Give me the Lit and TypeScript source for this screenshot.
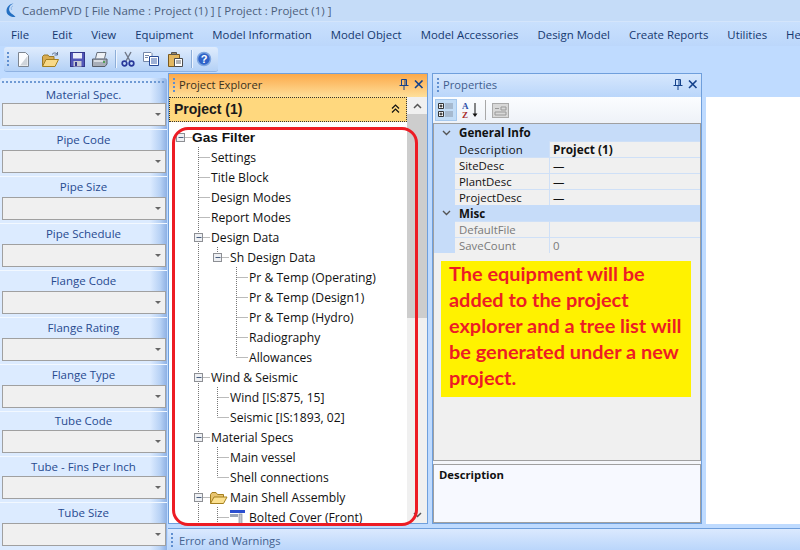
import { LitElement, html, css, svg } from "lit";
import { customElement } from "lit/decorators.js";

type Row = { d: number; t: string; box?: boolean; b?: boolean; icon?: "folder" | "part" };
const ROWS: Row[] = [
  { d: 0, t: "Gas Filter", box: true, b: true },
  { d: 1, t: "Settings" },
  { d: 1, t: "Title Block" },
  { d: 1, t: "Design Modes" },
  { d: 1, t: "Report Modes" },
  { d: 1, t: "Design Data", box: true },
  { d: 2, t: "Sh Design Data", box: true },
  { d: 3, t: "Pr & Temp (Operating)" },
  { d: 3, t: "Pr & Temp (Design1)" },
  { d: 3, t: "Pr & Temp (Hydro)" },
  { d: 3, t: "Radiography" },
  { d: 3, t: "Allowances" },
  { d: 1, t: "Wind & Seismic", box: true },
  { d: 2, t: "Wind [IS:875, 15]" },
  { d: 2, t: "Seismic [IS:1893, 02]" },
  { d: 1, t: "Material Specs", box: true },
  { d: 2, t: "Main vessel" },
  { d: 2, t: "Shell connections" },
  { d: 1, t: "Main Shell Assembly", box: true, icon: "folder" },
  { d: 2, t: "Bolted Cover (Front)", icon: "part" },
];
const GX = [11.5, 29.5, 48.5, 67.5];
const TEXTX = [23, 42, 61, 80];

function continues(i: number, l: number) {
  for (let j = i + 1; j < ROWS.length; j++) {
    if (ROWS[j].d < l) return false;
    if (ROWS[j].d === l) return true;
  }
  return true;
}
function rowSvg(i: number) {
  const r = ROWS[i];
  const dotted = "stroke:#777;stroke-dasharray:1 1;stroke-width:1";
  const w = r.icon ? TEXTX[r.d + 1] : TEXTX[r.d];
  const parts: unknown[] = [];
  for (let l = 1; l <= r.d; l++) {
    const c = continues(i, l);
    if (l === r.d) parts.push(svg`<line x1=${GX[l]} x2=${GX[l]} y1="0" y2=${c ? 20 : 10} style=${dotted}></line>`);
    else if (c) parts.push(svg`<line x1=${GX[l]} x2=${GX[l]} y1="0" y2="20" style=${dotted}></line>`);
  }
  const x = GX[r.d];
  parts.push(svg`<line x1=${x} x2=${x + 11} y1="10.5" y2="10.5" style=${dotted}></line>`);
  if (r.box) {
    parts.push(svg`<rect x=${x - 4} y="6.5" width="8" height="8" fill="#eef0f3" stroke="#8d8f94"></rect><line x1=${x - 2} x2=${x + 3} y1="10.5" y2="10.5" stroke="#4a5f80"></line>`);
  }
  if (r.icon === "folder") {
    parts.push(svg`<path d="M41.500 16.500V7.500l1.500-2h4l1.500 2h6v3" fill="#e8c470" stroke="#a5801f"></path><path d="M41.500 16.500l3.500-6.500h13l-3.500 6.500z" fill="#fbe08f" stroke="#a5801f"></path>`);
  }
  if (r.icon === "part") {
    parts.push(svg`<rect x="61" y="3" width="15" height="3" fill="#2b4fd0"></rect><rect x="61" y="7" width="8" height="3" fill="#9aa5b8"></rect><rect x="70" y="7" width="3" height="13" fill="#c4c8d0" stroke="#7b818c" stroke-width=".6"></rect>`);
  }
  return html`<svg class="guide" width=${w} height="20" viewBox="0 0 ${w} 20">${parts}</svg>`;
}

const COMBOS: [string, string][] = [
  ["Material Spec.", "first"], ["Pipe Code", ""], ["Pipe Size", ""], ["Pipe Schedule", ""], ["Flange Code", ""],
  ["Flange Rating", ""], ["Flange Type", ""], ["Tube Code", "l18"], ["Tube - Fins Per Inch", "l19"], ["Tube Size", ""],
];
const MENUS = [
  "File", "Edit", "View", "Equipment", "Model Information", "Model Object",
  "Model Accessories", "Design Model", "Create Reports", "Utilities", "Help",
];

const pinClose = html`
  <svg class="pin" width="10" height="11" viewBox="0 0 10 11"><path d="M2.500 .5h5v6h-5zM6 .5v6M.5 6.500h9M5 7v4" fill="none" stroke="#15428b"></path></svg>
  <svg class="pin" width="10" height="9" viewBox="0 0 10 9"><path d="M1 .5l7.500 7.500M8.500 .5l-7.500 7.500" stroke="#15428b" stroke-width="1.600" fill="none"></path></svg>`;
const dots = html`<span class="dots"></span>`;

const TB: [string, number, unknown][] = [
  ["w24", 16, svg`<path d="M3.500 1.500h7l3 3v11h-10z" fill="#fbfcfe" stroke="#7d8590"></path><path d="M5 14.500L12.500 5v9.500z" fill="#cfd4da"></path>`],
  ["w30", 18, svg`<path d="M1.500 15V5.500l1.500-1.500h4l1 1.500h5v3" fill="#d9ad52" stroke="#9a7a2c"></path><path d="M1.500 15.500l3.500-7h12.500l-3.500 7z" fill="#f8d988" stroke="#a5801f"></path><path d="M11 3.500c1.500-2 3.500-2 5-.5M16.500 1v3h-3" stroke="#5d6f8c" fill="none"></path>`],
  ["w24", 16, svg`<rect x="1.500" y="1.500" width="14" height="14" fill="#5257b8" stroke="#34378c"></rect><rect x="4" y="2" width="9" height="5.500" fill="#e9ecfa"></rect><rect x="4.500" y="10" width="8" height="5.500" fill="#c7cad4"></rect><rect x="6" y="11" width="2" height="4" fill="#34378c"></rect>`],
  ["w20", 17, svg`<path d="M4.500 7.500l1.500-6h9l-1.500 6" fill="#eef1f5" stroke="#68707c"></path><path d="M1.500 8h14.500v5l-2 2.500H1.500z" fill="#a8aeb8" stroke="#565d68"></path><path d="M3 10h9" stroke="#e8ebf0" stroke-width="1.500"></path><circle cx="13" cy="11" r="1" fill="#3a9a3a"></circle>`],
  ["sep", 0, null],
  ["w24", 16, svg`<path d="M5 1l5 9M11 1L6 10" stroke="#707888" stroke-width="1.400" fill="none"></path><circle cx="4.500" cy="12.500" r="2.300" fill="none" stroke="#28389a" stroke-width="1.700"></circle><circle cx="11.500" cy="12.500" r="2.300" fill="none" stroke="#28389a" stroke-width="1.700"></circle>`],
  ["w22", 16, svg`<path d="M.5 1.500h7.500l1 1v8h-8.500z" fill="#fff" stroke="#7487a8"></path><path d="M6.500 5.500h9v9h-9z" fill="#fff" stroke="#274a96"></path><path d="M8 8h6M8 10h6M8 12h6" stroke="#3d62ad"></path><path d="M2 4.500h4M2 6.500h3" stroke="#7487a8"></path>`],
  ["w26", 17, svg`<path d="M1.500 3.500h11v12h-11z" fill="#e4b860" stroke="#7a5a20"></path><path d="M4.500 3.500h5v-2h-5z" fill="#a08a60" stroke="#555"></path><path d="M7.500 7.500h8v8h-8z" fill="#fff" stroke="#4c4c4c"></path><path d="M9 10h5M9 12h5" stroke="#666"></path>`],
  ["sep2", 0, null],
  ["w24", 16, svg`<circle cx="8" cy="8" r="6.500" fill="#2f62c8" stroke="#7ea6e0" stroke-width="1.500"></circle><text x="8" y="12" text-anchor="middle" font-size="11" font-weight="700" font-family="Liberation Sans, sans-serif" fill="#fff">?</text>`],
];

@customElement("app-root")
export class AppRoot extends LitElement {
  static styles = css`
    :host {
      display: flex; flex-direction: column; width: 800px; height: 550px; overflow: hidden;
      background: #bfdbff; font: 12px "Open Sans", "Noto Sans", sans-serif; color: #15428b;
    }
    * { box-sizing: border-box; }
    .title {
      height: 22px; flex: none; display: flex; align-items: center; gap: 6px; padding-left: 6px;
      background: #c5dcf8; color: #4d5f7c; font-size: 11.5px; border-bottom: 1px solid #d4e5fb;
    }
    .menu {
      height: 24px; flex: none; display: flex; align-items: center; padding-left: 11px; white-space: nowrap;
      background: linear-gradient(#c9e0fd, #bcd7fb); color: #15386f; font-size: 11.4px;
    }
    .menu span { margin-right: 19px; }
    .menu span:first-child { margin-right: 23px; }
    .tbwrap { height: 27px; flex: none; padding: 1px 0 1px 4px; display: flex; }
    .toolbar {
      width: 214px; height: 25px; display: flex; align-items: center; padding-left: 1px;
      background: linear-gradient(#dfecfd, #b4d1f6); border-radius: 3px; border-bottom: 1px solid #8fb2e2;
    }
    .toolbar svg { flex: none; }
    .tb { display: flex; justify-content: center; flex: none; }
    .w20 { width: 20px; } .w22 { width: 22px; } .w24 { width: 24px; } .w26 { width: 26px; } .w30 { width: 30px; }
    .sep { width: 1px; height: 18px; background: #8daed8; margin: 0 0 0 6px; box-shadow: 1px 0 #eef5ff; flex: none; }
    .sep2 { width: 1px; height: 18px; background: #8daed8; margin: 0 0 0 3px; box-shadow: 1px 0 #eef5ff; flex: none; }
    .dots {
      width: 2px; height: 14px; flex: none; margin: 0 2px;
      background: repeating-linear-gradient(#5f8fd0 0 2px, transparent 2px 4px);
    }
    .body { flex: 1; display: flex; min-height: 0; }
    .left {
      width: 167px; flex: none; margin-top: 5px; padding-top: 3px;
      background: linear-gradient(90deg, #dcebff 0 150px, #b8d2f5 160px, #8db0e4 167px);
      border-radius: 3px 3px 0 0;
    }
    .hdots { height: 2px; margin: 0 2px 4px 2px; background: repeating-linear-gradient(90deg, #6f9ad4 0 2px, transparent 2px 4px); }
    .group { display: flex; flex-direction: column; align-items: center; padding: 0 1px 3px; }
    .group + .group { border-top: 1px solid #f2f8ff; }
    .group label { height: 20px; line-height: 20px; flex: none; color: #274a90; font-size: 11.5px; white-space: nowrap; }
    .group.first label { height: 16px; line-height: 16px; }
    .group.l18 label { height: 18px; line-height: 18px; }
    .group.l19 label { height: 19px; line-height: 19px; }
    .combo {
      width: 164px; height: 23px; flex: none; background: #f0f0f0; border: 1px solid #a0a0a0;
      display: flex; align-items: center; justify-content: flex-end; padding-right: 4px;
    }
    .arrow { width: 0; height: 0; border: 3px solid transparent; border-top: 3px solid #666; margin-top: 3px; }
    .right { flex: 1; display: flex; flex-direction: column; min-width: 0; padding-left: 1px; }
    .main { flex: 1; display: flex; min-height: 0; }
    .panel { display: flex; flex-direction: column; border: 1px solid #6f9fdc; height: 451px; }
    .explorer { width: 260px; background: #fff; }
    .phead {
      height: 23px; flex: none; display: flex; align-items: center; padding: 0 3px 2px 2px; color: #3d3d3d; font-size: 11.2px;
      background: linear-gradient(#fca94a, #fedf9a); gap: 5px;
    }
    .phead .dots { margin-right: 0; }
    .phead .name { flex: 1; margin-left: -1px; }
    .props { width: 270px; margin-left: 4px; background: #f0f0f0; }
    .props .phead { background: linear-gradient(#d6e7fd, #bad6fa); color: #3f5d8d; }
    .explorer .phead .name { color: #3a3020; }
    .ebody { flex: 1; display: flex; min-height: 0; position: relative; }
    .ecol { flex: 1; display: flex; flex-direction: column; min-width: 0; }
    .proj {
      height: 25px; flex: none; display: flex; align-items: center; justify-content: space-between; padding: 0 6px 2px 4px;
      background: #ffd87e; border: 1px dotted #333; font: 700 14px "Liberation Sans", sans-serif; color: #1a1a1a;
    }
    .tree { flex: 1; overflow: hidden; padding: 5px 0 0 0; }
    .row { height: 20px; display: flex; align-items: center; color: #111; font-size: 12.15px; white-space: nowrap; }
    .row.b { font: 700 13.7px "Liberation Sans", sans-serif; }
    .guide { flex: none; }
    .sbar { width: 20px; flex: none; background: #f0f0f0; display: flex; flex-direction: column; align-items: center; }
    .sbtn { height: 17px; flex: none; display: flex; align-items: center; justify-content: center; width: 100%; }
    .thumb { width: 100%; height: 204px; flex: none; background: #cdcdcd; }
    .sfill { flex: 1; }
    .outline {
      position: absolute; left: 3px; top: 30px; width: 246px; height: 399px;
      border: 3px solid #ed1c24; border-radius: 16px; pointer-events: none;
    }
    .ptools {
      height: 26px; flex: none; display: flex; align-items: center; gap: 3px; padding-left: 2px; background: linear-gradient(#fbfdff, #eef2f8);
    }
    .ptbtn { width: 22px; height: 22px; display: flex; align-items: center; justify-content: center; }
    .ptbtn.on { background: #c2dcf6; border: 1px solid #a5c8ee; }
    .psep { width: 1px; height: 20px; background: #a8a8a8; }
    .grid { flex: 1; position: relative; border: 1px solid #a0a0a0; background: #f0f0f0; }
    .cat { height: 16px; display: flex; align-items: center; background: #c6dcf9; color: #111; font: 700 11.6px "Open Sans", sans-serif; }
    .cat.tall { height: 17px; }
    .cat .tw { width: 25px; display: flex; justify-content: center; }
    .pr { height: 16px; display: flex; color: #111; font-size: 11.4px; border-top: 1px solid #cfe0f7; background: #f0f0f0; }
    .pr .gut { width: 21px; background: #c6dcf9; flex: none; margin-top: -1px; }
    .pr .n { width: 95px; padding-left: 4px; flex: none; line-height: 15px; border-right: 1px solid #cfe0f7; }
    .pr .n.sel { background: #c6dcf9; margin-top: -1px; padding-top: 1px; letter-spacing: .3px; }
    .pr .v { flex: 1; padding-left: 3px; line-height: 15px; }
    .pr .v.b { font-weight: 700; font-size: 11.8px; }
    .pr.dim { color: #7a7a7a; }
    .callout {
      position: absolute; left: 7px; top: 137px; width: 250px; height: 136px; padding: 0 8px;
      background: #fff200; color: #ed1c24; font: 700 19.9px/26px Lato, sans-serif;
    }
    .callout span { display: block; margin-top: -1px; }
    .split { height: 3px; flex: none; background: #f4f6fa; }
    .desc {
      height: 59px; flex: none; background: #f7f9ff; border: 1px solid #a0a0a0; padding: 2px 5px; color: #111; font-weight: 700; font-size: 11.3px;
    }
    .canvas { flex: 1; background: #fff; margin: 24px 0 0 4px; height: 427px; }
    .errbar {
      height: 22px; flex: none; margin-top: 4px; display: flex; align-items: center; gap: 4px; padding: 1px 0 0 1px; font-size: 11.2px;
      background: linear-gradient(#dbe9fe, #bad6fb); border-top: 1px solid #6f9fdc; color: #44628f;
    }
  `;

  render() {
    return html`
      <div class="title">
        <svg width="10" height="15" viewBox="0 0 10 15"><path d="M7.500 .5C3.500 2 2 6 4 9c1 2 4 2.500 5.500 5C6 14.500 .5 12.500 .5 8 .5 4 3.500 1 7.500 .5z" fill="#2470c2"></path><path d="M7 3c-2 .5-2.500 3-1 4" fill="none" stroke="#8fb8e8"></path></svg>
        <span>CademPVD [ File Name : Project (1) ] [ Project : Project (1) ]</span>
      </div>
      <div class="menu">${MENUS.map((m) => html`<span>${m}</span>`)}</div>
      <div class="tbwrap">
        <div class="toolbar">
          ${dots}
          ${TB.map(([c, w, s]) => s
            ? html`<div class="tb ${c}"><svg width=${w} height="17" viewBox="0 0 ${w} 17">${s}</svg></div>`
            : html`<div class=${c}></div>`)}
        </div>
      </div>
      <div class="body">
        <div class="left">
          <div class="hdots"></div>
          ${COMBOS.map(([c, k]) => html`
            <div class="group ${k}">
              <label>${c}</label>
              <div class="combo"><span class="arrow"></span></div>
            </div>`)}
        </div>
        <div class="right">
          <div class="main">
            <div class="panel explorer">
              <div class="phead">${dots}<span class="name">Project Explorer</span>${pinClose}</div>
              <div class="ebody">
                <div class="ecol">
                  <div class="proj"><span>Project (1)</span>
                    <svg width="9" height="9" viewBox="0 0 9 9"><path d="M1 4.500l3.500-3.500 3.500 3.500M1 8.500l3.500-3.500 3.500 3.500" fill="none" stroke="#111" stroke-width="1.200"></path></svg>
                  </div>
                  <div class="tree">
                    ${ROWS.map((r, i) => html`<div class="row ${r.b ? "b" : ""}">${rowSvg(i)}<span>${r.t}</span></div>`)}
                  </div>
                </div>
                <div class="sbar">
                  <div class="sbtn"><svg width="9" height="6" viewBox="0 0 9 6"><path d="M1 5l3.500-3.500L8 5" fill="none" stroke="#555" stroke-width="1.500"></path></svg></div>
                  <div class="thumb"></div>
                  <div class="sfill"></div>
                  <div class="sbtn"><svg width="9" height="6" viewBox="0 0 9 6"><path d="M1 1l3.500 3.500L8 1" fill="none" stroke="#555" stroke-width="1.500"></path></svg></div>
                </div>
                <div class="outline"></div>
              </div>
            </div>
            <div class="panel props">
              <div class="phead">${dots}<span class="name">Properties</span>${pinClose}</div>
              <div class="ptools">
                <div class="ptbtn on"><svg width="18" height="18" viewBox="0 0 18 18"><path d="M1.500 2.500h5v5h-5zM1.500 10.500h5v5h-5z" fill="#fff" stroke="#333"></path><path d="M2.500 5h3M4 3.500v3M2.500 13h3M4 11.500v3" stroke="#111"></path><path d="M8 3h8M8 5h8M8 7h8M8 11h8M8 13h8M8 15h8" stroke="#8a97a8"></path></svg></div>
                <div class="ptbtn"><svg width="18" height="18" viewBox="0 0 18 18"><text x="0" y="8" font-size="9" font-weight="700" font-family="Liberation Serif, serif" fill="#2b4fa8">A</text><text x="0" y="17" font-size="9" font-weight="700" font-family="Liberation Serif, serif" fill="#a82b2b">Z</text><path d="M13 2v12" stroke="#111"></path><path d="M10.500 12.500L13 16l2.500-3.500z" fill="#111"></path></svg></div>
                <div class="psep"></div>
                <div class="ptbtn"><svg width="17" height="15" viewBox="0 0 17 15"><rect x=".5" y=".5" width="16" height="14" fill="#d8d8d8" stroke="#aaa"></rect><path d="M3 5.500h4M3 9h11v3H3zM9 4h5v3H9z" fill="none" stroke="#999"></path></svg></div>
              </div>
              <div class="grid">
                <div class="cat tall"><span class="tw"><svg width="9" height="6" viewBox="0 0 9 6"><path d="M1 1l3.500 3.500L8 1" fill="none" stroke="#555" stroke-width="1.400"></path></svg></span>General Info</div>
                <div class="pr"><div class="gut"></div><div class="n sel">Description</div><div class="v b">Project (1)</div></div>
                <div class="pr"><div class="gut"></div><div class="n">SiteDesc</div><div class="v">—</div></div>
                <div class="pr"><div class="gut"></div><div class="n">PlantDesc</div><div class="v">—</div></div>
                <div class="pr"><div class="gut"></div><div class="n">ProjectDesc</div><div class="v">—</div></div>
                <div class="cat"><span class="tw"><svg width="9" height="6" viewBox="0 0 9 6"><path d="M1 1l3.500 3.500L8 1" fill="none" stroke="#555" stroke-width="1.400"></path></svg></span>Misc</div>
                <div class="pr dim"><div class="gut"></div><div class="n">DefaultFile</div><div class="v"></div></div>
                <div class="pr dim"><div class="gut"></div><div class="n">SaveCount</div><div class="v">0</div></div>
                <div class="callout"><span>The equipment will be added to the project explorer and a tree list will be generated under a new project.</span></div>
              </div>
              <div class="split"></div>
              <div class="desc">Description</div>
            </div>
            <div class="canvas"></div>
          </div>
          <div class="errbar">${dots}<span>Error and Warnings</span></div>
        </div>
      </div>
    `;
  }
}
